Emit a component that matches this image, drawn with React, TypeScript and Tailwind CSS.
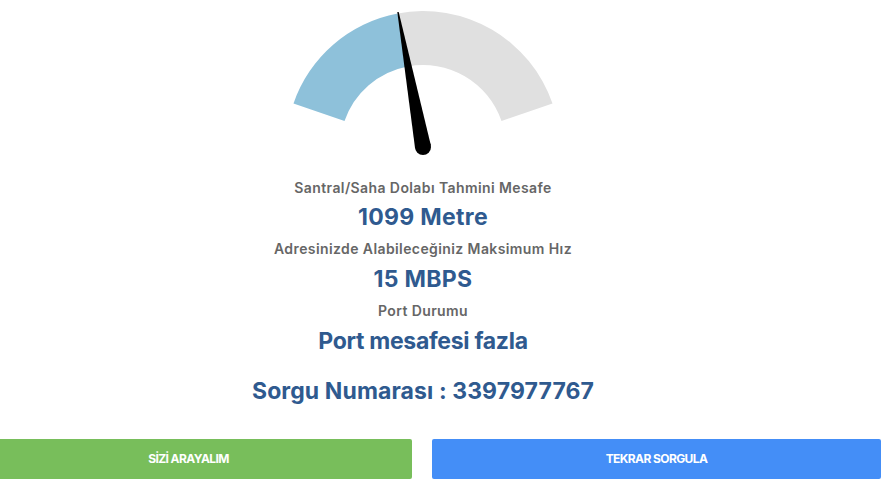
import React from "react";

function Gauge() {
  return (
    <svg width="290" height="160" viewBox="0 0 290 160" className="block">
      <path d="M 15.5 103.4 A 137 137 0 0 1 119.6 13.4 L 129.6 66.4 A 83 83 0 0 0 66.5 121 Z" fill="#8ec1da" />
      <path d="M 119.6 13.4 A 137 137 0 0 1 274.5 103.4 L 223.5 121 A 83 83 0 0 0 129.6 66.4 Z" fill="#e0e0e0" />
      <polygon points="119.3,11.9 120.7,12.1 152.9,145.5 137.1,148.5" fill="#000" />
      <circle cx="145" cy="147" r="8" fill="#000" />
    </svg>
  );
}

export default function App() {
  const font = { fontFamily: "Inter, 'Noto Sans', sans-serif" };
  return (
    <div className="w-[887px] h-[498px] bg-white overflow-hidden" style={font}>
      <div className="w-[846px] flex flex-col items-center">
        <Gauge />
        <div className="mt-[18px] h-[20px] leading-[20px] text-[14px] tracking-[0.4px] font-semibold text-[#666666]">
          Santral/Saha Dolabı Tahmini Mesafe
        </div>
        <div className="mt-[7px] h-[24px] leading-[24px] text-[23px] tracking-[0.3px] font-bold text-[#2f5a8f]">
          1099 Metre
        </div>
        <div className="mt-[10px] h-[20px] leading-[20px] text-[14px] tracking-[0.4px] font-semibold text-[#666666]">
          Adresinizde Alabileceğiniz Maksimum Hız
        </div>
        <div className="mt-[8px] h-[24px] leading-[24px] text-[23px] tracking-[0.3px] font-bold text-[#2f5a8f]">
          15 MBPS
        </div>
        <div className="mt-[10px] h-[20px] leading-[20px] text-[14px] tracking-[0.4px] font-semibold text-[#666666]">
          Port Durumu
        </div>
        <div className="mt-[8px] h-[24px] leading-[24px] text-[23px] tracking-[-0.3px] font-bold text-[#2f5a8f]">
          Port mesafesi fazla
        </div>
        <div className="mt-[26px] h-[24px] leading-[24px] text-[23px] tracking-[0.1px] font-bold text-[#2f5a8f]">
          Sorgu Numarası : 3397977767
        </div>
      </div>
      <div className="mt-[36px] -ml-[35px] flex gap-[20px]">
        <button className="w-[447px] h-[40px] rounded-[2px] bg-[#78be5b] text-white text-[12px] font-bold tracking-[-0.6px] flex items-center justify-center">
          SİZİ ARAYALIM
        </button>
        <button className="w-[449px] h-[40px] rounded-[2px] bg-[#448ef7] text-white text-[12px] font-bold tracking-[-0.6px] flex items-center justify-center">
          TEKRAR SORGULA
        </button>
      </div>
    </div>
  );
}
